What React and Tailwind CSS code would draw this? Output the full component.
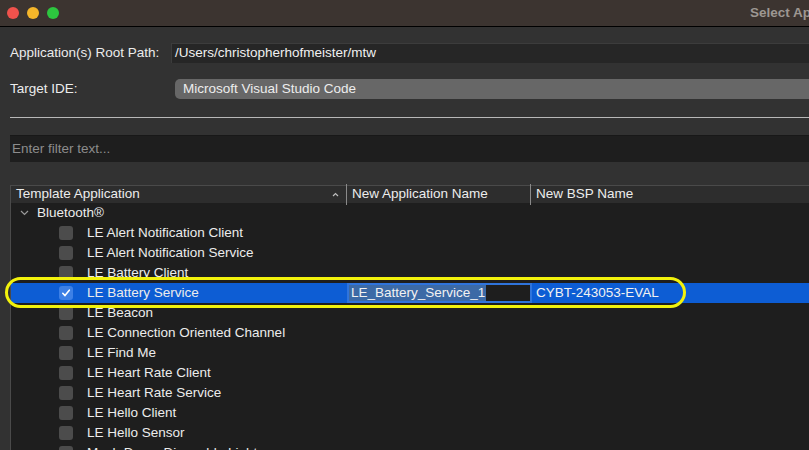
import React from 'react';

const items = [
  'LE Alert Notification Client',
  'LE Alert Notification Service',
  'LE Battery Client',
  'LE Battery Service',
  'LE Beacon',
  'LE Connection Oriented Channel',
  'LE Find Me',
  'LE Heart Rate Client',
  'LE Heart Rate Service',
  'LE Hello Client',
  'LE Hello Sensor',
  'Mesh Demo Dimmable Light',
];

const Check = () => (
  <svg width="10" height="10" viewBox="0 0 10 10" fill="none">
    <path d="M1.8 5.3 L4 7.6 L8.3 2.2" stroke="white" strokeWidth="1.6" strokeLinecap="round" strokeLinejoin="round" />
  </svg>
);

const Row = ({ name }) => {
  const selected = name === 'LE Battery Service';
  return (
    <div className={`flex h-[20px] items-center ${selected ? 'bg-[#0d5dd4]' : ''}`}>
      <div className="flex w-[336px] shrink-0 items-center">
        <div
          className={`ml-[48px] flex h-[14px] w-[14px] items-center justify-center rounded-[3px] ${
            selected ? 'bg-[#3d80e6]' : 'bg-[#4c4c4c]'
          }`}
        >
          {selected && <Check />}
        </div>
        <span className="ml-[14px] whitespace-nowrap text-[#ececec]">{name}</span>
      </div>
      {selected && (
        <>
          <div className="flex h-[20px] w-[185px] shrink-0 items-stretch border-2 border-[#2f74dc] bg-[#1e1e1e]">
            <span className="flex items-center bg-[#3c6aa6] pl-[2px] pr-[1px] text-[#f2f2f2] whitespace-nowrap">
              LE_Battery_Service_1
            </span>
          </div>
          <span className="ml-[4px] whitespace-nowrap text-[#f2f2f2]">CYBT-243053-EVAL</span>
        </>
      )}
    </div>
  );
};

export default function App() {
  return (
    <div className="relative h-[450px] w-[809px] overflow-hidden bg-[#323232] font-['Liberation_Sans',Arial,sans-serif] text-[13.5px] text-[#e6e6e6]">
      {/* Title bar */}
      <div className="flex h-[27px] items-center border-b border-black bg-[#3c3430]">
        <div className="ml-[7px] flex gap-[8px]">
          <span className="h-[12px] w-[12px] rounded-full bg-[#f0524c]" />
          <span className="h-[12px] w-[12px] rounded-full bg-[#f5b62a]" />
          <span className="h-[12px] w-[12px] rounded-full bg-[#2dc63f]" />
        </div>
        <span className="ml-[691px] whitespace-nowrap font-bold text-[#9d9792]">Select Application</span>
      </div>

      {/* Root path */}
      <div className="mt-[16px] flex h-[20px] items-center">
        <span className="w-[171px] shrink-0 pl-[10px] whitespace-nowrap text-[#ececec]">Application(s) Root Path:</span>
        <div className="flex h-[20px] flex-1 items-center border-t border-l border-[#3c3c3c] bg-[#262626] pl-[3px] text-[#f0f0f0]">
          /Users/christopherhofmeister/mtw
        </div>
      </div>

      {/* Target IDE */}
      <div className="mt-[16px] flex h-[20px] items-center">
        <span className="w-[175px] shrink-0 pl-[10px] text-[#ececec]">Target IDE:</span>
        <div className="flex h-[20px] flex-1 items-center rounded-l-[5px] bg-[#676767] pl-[8px] text-[#ededed]">
          Microsoft Visual Studio Code
        </div>
      </div>

      <div className="ml-[10px] mt-[18px] h-px bg-[#b8b8b8]" />

      {/* Filter */}
      <div className="ml-[10px] mt-[17px] flex h-[27px] items-center border-t border-[#181818] bg-[#1e1e1e] pl-[2px] text-[#8c8c8c]">
        Enter filter text...
      </div>

      {/* Table */}
      <div className="ml-[10px] mt-[23px] border-t border-l border-[#4a4a4a] bg-[#1e1e1e]">
        <div className="flex h-[17px] items-center bg-[#2d2d2d] text-[#ececec]">
          <div className="flex w-[335px] shrink-0 items-center justify-between pl-[5px] pr-[7px]">
            <span>Template Application</span>
            <svg width="7" height="5" viewBox="0 0 7 5" fill="none">
              <path d="M1 4 L3.5 1.5 L6 4" stroke="#bdbdbd" strokeWidth="1.2" />
            </svg>
          </div>
          <div className="flex w-[184px] shrink-0 items-center border-l border-[#8a8a8a] pl-[5px]">New Application Name</div>
          <div className="flex items-center border-l border-[#8a8a8a] pl-[5px]">New BSP Name</div>
        </div>
        <div className="flex h-[20px] items-center">
          <svg className="ml-[9px]" width="9" height="6" viewBox="0 0 9 6" fill="none">
            <path d="M1 1 L4.5 4.5 L8 1" stroke="#9a9a9a" strokeWidth="1.2" />
          </svg>
          <span className="ml-[8px] text-[#ececec]">Bluetooth®</span>
        </div>
        {items.map((n) => (
          <Row key={n} name={n} />
        ))}
      </div>

      {/* Highlight annotation */}
      <div className="pointer-events-none absolute left-[5px] top-[277px] h-[31px] w-[681px] rounded-full border-[3.5px] border-[#f2f20c]" />
    </div>
  );
}
